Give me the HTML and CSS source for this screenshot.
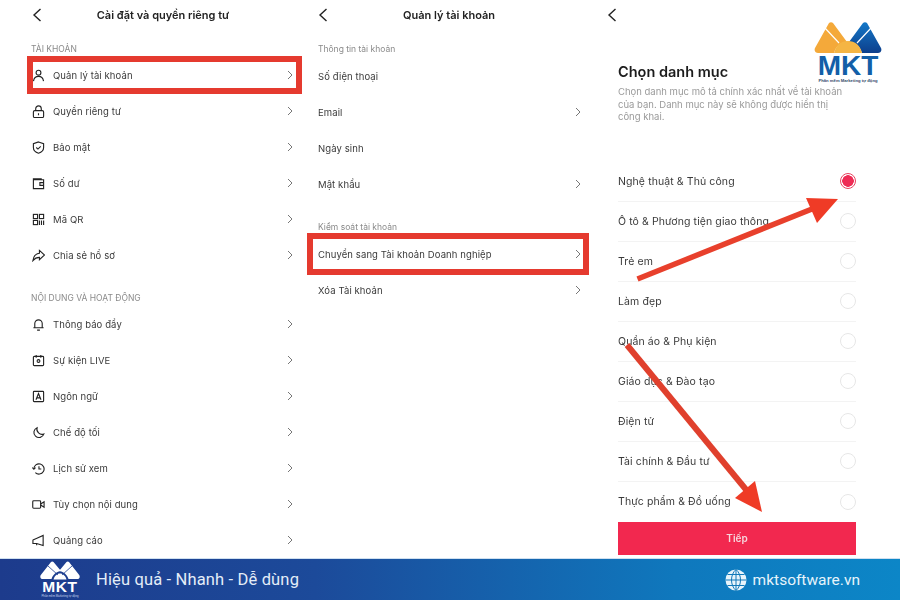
FILE: index.html
```html
<!DOCTYPE html>
<html lang="vi">
<head>
<meta charset="utf-8">
<title>Cài đặt TikTok</title>
<link rel="stylesheet" href="styles.css">
</head>
<body>
<svg class="sprite" width="0" height="0">
  <symbol id="chev" viewBox="0 0 6 10"><path d="M1 1l4 4-4 4" fill="none" stroke="#777" stroke-width="1"/></symbol>
  <symbol id="back" viewBox="0 0 10 14"><path d="M8.5 1L2 7l6.5 6" fill="none" stroke="#222" stroke-width="1.4"/></symbol>
</svg>
<div class="page">
  <main class="screens">
    <section class="col col-a">
      <header class="top"><svg class="back"><use href="#back"/></svg><h1>Cài đặt và quyền riêng tư</h1></header>
      <div class="label caps first">TÀI KHOẢN</div>
      <div class="row hl">
        <svg class="ico" viewBox="0 0 14 14"><circle cx="7" cy="4" r="2.6"/><path d="M1.6 13c.6-3.4 2.8-5 5.4-5s4.800 1.600 5.400 5"/></svg>
        <span class="txt">Quản lý tài khoản</span><svg class="chev"><use href="#chev"/></svg>
      </div>
      <div class="row">
        <svg class="ico" viewBox="0 0 14 14"><rect x="1.500" y="6" width="11" height="7.500" rx="1.500"/><path d="M4 6V4a3 3 0 016 0v2M7 9v2"/></svg>
        <span class="txt">Quyền riêng tư</span><svg class="chev"><use href="#chev"/></svg>
      </div>
      <div class="row">
        <svg class="ico" viewBox="0 0 14 14"><path d="M7 1l5.500 1.800V7c0 3-2.400 5.200-5.500 6.200C3.900 12.200 1.500 10 1.500 7V2.800z"/><path d="M4.600 7l1.800 1.700 3-3"/></svg>
        <span class="txt">Bảo mật</span><svg class="chev"><use href="#chev"/></svg>
      </div>
      <div class="row">
        <svg class="ico" viewBox="0 0 14 14"><path d="M12.500 3H1.500v9.500h11zM1.500 3V2h9"/><path d="M12.500 6H8.500v3h4"/></svg>
        <span class="txt">Số dư</span><svg class="chev"><use href="#chev"/></svg>
      </div>
      <div class="row">
        <svg class="ico" viewBox="0 0 14 14"><rect x="1.500" y="1.500" width="4.500" height="4.500"/><rect x="8" y="1.500" width="4.500" height="4.500"/><rect x="1.500" y="8" width="4.500" height="4.500"/><path d="M8 8v5M10.200 8v5M12.500 8v5"/></svg>
        <span class="txt">Mã QR</span><svg class="chev"><use href="#chev"/></svg>
      </div>
      <div class="row">
        <svg class="ico" viewBox="0 0 14 14"><path d="M8 1.500l5.500 5-5.500 5V9C5 9 3 10 1 12.500 1.500 8 4 5 8 4.500z"/></svg>
        <span class="txt">Chia sẻ hồ sơ</span><svg class="chev"><use href="#chev"/></svg>
      </div>
      <div class="label caps">NỘI DUNG VÀ HOẠT ĐỘNG</div>
      <div class="row">
        <svg class="ico" viewBox="0 0 14 14"><path d="M1.500 10.500h11M3 10.500V6a4 4 0 018 0v4.500M5.500 13h3"/></svg>
        <span class="txt">Thông báo đẩy</span><svg class="chev"><use href="#chev"/></svg>
      </div>
      <div class="row">
        <svg class="ico" viewBox="0 0 14 14"><rect x="1.500" y="2.500" width="11" height="10" rx="1"/><path d="M4.500 1v3M9.500 1v3"/><circle cx="7" cy="7.500" r="1.500"/></svg>
        <span class="txt">Sự kiện LIVE</span><svg class="chev"><use href="#chev"/></svg>
      </div>
      <div class="row">
        <svg class="ico" viewBox="0 0 14 14"><rect x="1.500" y="1.500" width="11" height="11" rx=".8"/><path d="M4.300 10.500L7 3.800l2.700 6.700M5.200 8.500h3.600"/></svg>
        <span class="txt">Ngôn ngữ</span><svg class="chev"><use href="#chev"/></svg>
      </div>
      <div class="row">
        <svg class="ico" viewBox="0 0 14 14"><path d="M5.500 1.800A5.500 5.500 0 1012.800 8.500 5.500 5.500 0 015.500 1.800z"/></svg>
        <span class="txt">Chế độ tối</span><svg class="chev"><use href="#chev"/></svg>
      </div>
      <div class="row">
        <svg class="ico" viewBox="0 0 14 14"><path d="M2 7.500a5.500 5.500 0 111.600 3.900"/><path d="M.300 6l1.700 1.800L3.800 6M7.500 4.500v3h2.500"/></svg>
        <span class="txt">Lịch sử xem</span><svg class="chev"><use href="#chev"/></svg>
      </div>
      <div class="row">
        <svg class="ico" viewBox="0 0 14 14"><rect x=".8" y="3" width="8.500" height="8" rx="1"/><path d="M9.300 6.500L13 4v6L9.300 7.500"/></svg>
        <span class="txt">Tùy chọn nội dung</span><svg class="chev"><use href="#chev"/></svg>
      </div>
      <div class="row">
        <svg class="ico" viewBox="0 0 14 14"><path d="M12 1.500v11L5 10.300H1V6.500z M1 6.500L12 1.500M5 10.300L5 12"/></svg>
        <span class="txt">Quảng cáo</span><svg class="chev"><use href="#chev"/></svg>
      </div>
    </section>

    <section class="col col-b">
      <header class="top"><svg class="back"><use href="#back"/></svg><h1>Quản lý tài khoản</h1></header>
      <div class="label first">Thông tin tài khoản</div>
      <div class="row"><span class="txt">Số điện thoại</span></div>
      <div class="row"><span class="txt">Email</span><svg class="chev"><use href="#chev"/></svg></div>
      <div class="row"><span class="txt">Ngày sinh</span></div>
      <div class="row"><span class="txt">Mật khẩu</span><svg class="chev"><use href="#chev"/></svg></div>
      <div class="label">Kiểm soát tài khoản</div>
      <div class="row hl"><span class="txt">Chuyển sang Tài khoản Doanh nghiệp</span><svg class="chev"><use href="#chev"/></svg></div>
      <div class="row"><span class="txt">Xóa Tài khoản</span><svg class="chev"><use href="#chev"/></svg></div>
    </section>

    <section class="col col-c">
      <header class="top"><svg class="back"><use href="#back"/></svg></header>
      <h2>Chọn danh mục</h2>
      <p class="desc">Chọn danh mục mô tả chính xác nhất về tài khoản của bạn. Danh mục này sẽ không được hiển thị công khai.</p>
      <ul class="cats">
        <li class="cat"><span class="txt">Nghệ thuật &amp; Thủ công</span><i class="radio on"></i></li>
        <li class="cat"><span class="txt">Ô tô &amp; Phương tiện giao thông</span><i class="radio"></i></li>
        <li class="cat"><span class="txt">Trẻ em</span><i class="radio"></i></li>
        <li class="cat"><span class="txt">Làm đẹp</span><i class="radio"></i></li>
        <li class="cat"><span class="txt">Quần áo &amp; Phụ kiện</span><i class="radio"></i></li>
        <li class="cat"><span class="txt">Giáo dục &amp; Đào tạo</span><i class="radio"></i></li>
        <li class="cat"><span class="txt">Điện tử</span><i class="radio"></i></li>
        <li class="cat"><span class="txt">Tài chính &amp; Đầu tư</span><i class="radio"></i></li>
        <li class="cat"><span class="txt">Thực phẩm &amp; Đồ uống</span><i class="radio"></i></li>
      </ul>
      <button class="next">Tiếp</button>
    </section>
  </main>

  <footer class="bar">
    <div class="bar-left">
      <div class="mini">
        <svg class="mini-mark" viewBox="0 0 40 19">
          <path d="M11 1c.7-.8 1.800-.8 2.500 0L21 10c-4 .4-8 3-9.500 8H3c-2.400 0-3.400-2-2.200-4z" fill="#fff"/>
          <path d="M29 1c-.7-.8-1.800-.8-2.500 0L19 10c4 .4 8 3 9.500 8H37c2.400 0 3.400-2 2.200-4z" fill="#fff"/>
          <path d="M13.500 18.500c1-3.600 3.500-6 6.500-6s5.500 2.400 6.500 6z" fill="#fff"/>
          <path d="M8 5l10 9M32 5L22 14" stroke="#1d3f90" stroke-width=".8" fill="none"/>
        </svg>
        <span class="mini-name">MKT</span>
        <span class="mini-sub">Phần mềm Marketing tự động</span>
      </div>
      <span class="slogan">Hiệu quả - Nhanh - Dễ dùng</span>
    </div>
    <div class="bar-right">
      <svg class="globe" viewBox="0 0 22 22"><circle cx="11" cy="11" r="10.500" fill="#e8f4fb"/><path d="M11 .5v21M.5 11h21M2.500 5.500h17M2.500 16.500h17M11 .5c-6 5-6 16 0 21M11 .5c6 5 6 16 0 21" fill="none" stroke="#1279b9" stroke-width="1"/></svg>
      <span class="site">mktsoftware.vn</span>
    </div>
  </footer>

  <svg class="arrows" viewBox="0 0 900 600">
    <path d="M637.500 279L812 209" stroke="#e8402c" stroke-width="5.500" fill="none"/>
    <path d="M838 199l-32-1 11 25z" fill="#ef3b26"/>
    <path d="M627 345L748 492" stroke="#e0402d" stroke-width="6" fill="none"/>
    <path d="M762 512l-7-31-20 17z" fill="#ef3b26"/>
  </svg>

  <div class="brand">
    <svg class="brand-mark" viewBox="0 0 68 32">
      <defs>
        <linearGradient id="blueMark" x1="0" y1="0" x2="0" y2="1"><stop offset="0" stop-color="#1478c8"/><stop offset="1" stop-color="#0d3f8c"/></linearGradient>
      </defs>
      <path d="M15 1c1-1 3-1 4 0l14 19c-6 0-11 4-13 11H4c-3 0-4-3-3-5z" fill="#f4a93a"/>
      <path d="M53 1c-1-1-3-1-4 0L35 20c6 0 11 4 13 11h16c3 0 4-3 3-5z" fill="url(#blueMark)"/>
      <path d="M20 31c2-8 7-12 14-12s12 4 14 12z" fill="#f5b544"/>
      <path d="M11 6l14 15M57 6L43 21" stroke="#fff" stroke-width="1.200" fill="none"/>
    </svg>
    <span class="brand-name">MKT</span>
    <span class="brand-sub">Phần mềm Marketing tự động</span>
  </div>
</div>
</body>
</html>
```
FILE: styles.css
```css
* { box-sizing: border-box; margin: 0; padding: 0; }
body { background: #fff; font-family: "Inter", "Liberation Sans", sans-serif; color: #333; }
.sprite { display: block; height: 0; }
.page { position: relative; width: 900px; height: 600px; overflow: hidden; display: flex; flex-direction: column; }
.screens { display: flex; height: 558px; filter: blur(.35px); }
.col { width: 300px; flex: none; }
.col-a { padding: 0 7px 0 31px; }
.col-b { padding: 0 19px 0 18px; }
.col-c { padding: 0 44px 0 18px; }

.top { height: 30px; display: flex; align-items: center; justify-content: center; position: relative; }
.top h1 { font-size: 11px; font-weight: 600; color: #222; }
.col-a .top h1 { margin-left: 2px; }
.col-b .top h1 { margin-left: -1px; }
.back { position: absolute; width: 10px; height: 14px; top: 8px; left: 1px; }
.col-b .back { left: 0; }
.col-c .back { left: -11px; }
.col-c .top { justify-content: flex-start; }

.label { height: 17px; margin-top: 17px; font-size: 8.500px; line-height: 17px; color: #8a8a8a; }
.label.first { margin-top: 11px; }
.label.caps { height: 16px; line-height: 16px; }

.row { height: 36px; display: flex; align-items: center; font-size: 9.500px; position: relative; }
.txt { flex: 1; color: #3a3a3a; letter-spacing: .1px; }
.ico { width: 13px; height: 13px; margin: 0 8px 0 1px; flex: none; fill: none; stroke: #222; stroke-width: 1.200; }
.chev { width: 6px; height: 10px; flex: none; }
.row.hl::after { content: ""; position: absolute; border: 6px solid #e53a2f; top: -1px; bottom: -1px; }
.col-a .row.hl::after { left: -4px; right: -9px; }
.col-b .row.hl::after { left: -11px; right: -8px; top: -3px; bottom: -3px; }

h2 { margin-top: 33px; font-size: 14.500px; line-height: 17px; font-weight: 600; color: #1c1c1c; }
.desc { margin-top: 6px; width: 232px; font-size: 9.500px; line-height: 12.500px; color: #9a9a9a; }
.cats { list-style: none; margin-top: 38px; }
.cat { height: 40px; display: flex; align-items: center; font-size: 10.500px; border-bottom: 1px solid #f3f3f3; }
.cat:last-child { border-bottom: 0; }
.radio { width: 16px; height: 16px; border: 1.200px solid #e6e6e6; border-radius: 50%; flex: none; }
.radio.on { border: 1.500px solid #e9415f; background: radial-gradient(circle, #ee2c55 0 5.500px, #fff 6px); }
.next { display: block; width: 238px; height: 33px; border: 0; background: #f2284f; color: #f6d5dc; font: 600 10px "Inter", sans-serif; }

.bar { height: 42px; flex: none; display: flex; align-items: center; justify-content: space-between; padding: 0 40px 0 40px; background: linear-gradient(90deg, #1d3b8c 0%, #1c4a9a 35%, #0f78bd 75%, #0c86c7 100%); border-top: 1px solid #cfe0f0; }
.bar-left { display: flex; align-items: center; gap: 16px; }
.mini { width: 40px; display: flex; flex-direction: column; align-items: center; }
.mini-mark { width: 40px; height: 19px; display: block; }
.mini-name { font: 900 15.500px/12px "Liberation Sans", sans-serif; color: #fff; letter-spacing: .6px; margin-top: 1px; }
.mini-sub { font: 400 2.800px/4px "Liberation Sans", sans-serif; color: #c7d6ec; white-space: nowrap; margin-top: 1px; }
.slogan { font: 400 16.500px/20px "Roboto", sans-serif; color: #e4edf8; letter-spacing: .15px; }
.bar-right { display: flex; align-items: center; gap: 6px; }
.globe { width: 22px; height: 22px; }
.site { font: 400 15.500px/20px "Roboto", sans-serif; color: #e6f4fb; }

.arrows { position: absolute; inset: 0; width: 900px; height: 600px; pointer-events: none; }

.brand { position: absolute; left: 814px; top: 22px; width: 68px; display: flex; flex-direction: column; align-items: center; }
.brand-mark { width: 68px; height: 32px; display: block; }
.brand-name { font: 900 28px/22px "Liberation Sans", sans-serif; color: #135fa8; margin-top: 1px; }
.brand-sub { font: 600 4.200px/6px "Liberation Sans", sans-serif; color: #33496b; white-space: nowrap; margin-top: 1px; }
```
